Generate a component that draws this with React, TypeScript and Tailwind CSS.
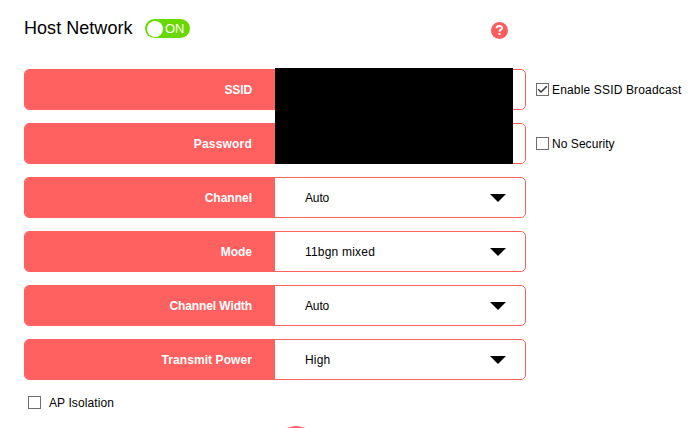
import { ReactNode } from 'react'

interface RowProps {
  label: string
  labelClass?: string
  children?: ReactNode
}

const Row = ({ label, labelClass = '', children }: RowProps) => (
  <div className="flex h-[41px] w-[502px] overflow-hidden rounded-[5px] border border-[#ff6161]">
    <div className="flex w-[250px] shrink-0 items-center justify-end bg-[#ff6161] pr-[23px] font-bold text-white">
      <span className={labelClass}>{label}</span>
    </div>
    {children}
  </div>
)

interface SelectProps {
  value: string
  valueClass?: string
}

const Select = ({ value, valueClass = '' }: SelectProps) => (
  <div className="flex flex-1 items-center justify-between pr-[19px] pl-[30px]">
    <span className={valueClass}>{value}</span>
    <svg width="16" height="8" viewBox="0 0 16 8">
      <path d="M0 0H16L8 8Z" fill="#000" />
    </svg>
  </div>
)

const Checkbox = ({ checked = false }: { checked?: boolean }) => (
  <svg width="13" height="13" viewBox="0 0 13 13" className="shrink-0">
    <rect x="0.5" y="0.5" width="12" height="12" fill="#fff" stroke="#6e6e6e" />
    {checked && (
      <path d="M2.2 6.2L5 9L10.8 3.2" fill="none" stroke="#333" strokeWidth="1.4" />
    )}
  </svg>
)

export default function App() {
  return (
    <div className="h-[428px] w-[689px] overflow-hidden bg-white pl-6 font-['Liberation_Sans',Arial,sans-serif] text-[12px] leading-[14px] whitespace-nowrap text-black">
      <header className="flex h-[69px] items-start">
        <h1 className="mt-[18px] w-[121px] text-[18px] leading-[21px] tracking-[0.04px]">Host Network</h1>
        <div className="mt-[19px] flex h-[19px] w-[45px] items-center rounded-full bg-[#69d800] pl-[2px]">
          <div className="size-[16px] shrink-0 rounded-full bg-white" />
          <span className="ml-[2px] text-[13px] text-white">ON</span>
        </div>
        <svg className="mt-[22px] ml-[301px]" width="17" height="17" viewBox="0 0 17 17">
          <circle cx="8.5" cy="8.5" r="8.5" fill="#ff5c5f" />
          <path
            d="M5.6 6.3C5.6 3.3 11.1 3.3 11.1 6C11.1 7.8 8.5 7.5 8.5 9.8"
            fill="none"
            stroke="#fff"
            strokeWidth="2"
          />
          <rect x="7.5" y="11" width="2" height="2" fill="#fff" />
        </svg>
      </header>

      <div className="relative flex flex-col gap-[13px]">
        <div className="flex items-center">
          <Row label="SSID" labelClass="-tracking-[0.1px]" />
          <label className="ml-[10px] flex items-center gap-[3px]">
            <Checkbox checked />
            <span className="tracking-[0.16px]">Enable SSID Broadcast</span>
          </label>
        </div>
        <div className="flex items-center">
          <Row label="Password" labelClass="tracking-[0.2px]" />
          <label className="ml-[10px] flex items-center gap-[3px]">
            <Checkbox />
            <span className="tracking-[0.05px]">No Security</span>
          </label>
        </div>
        <Row label="Channel">
          <Select value="Auto" valueClass="-tracking-[0.15px]" />
        </Row>
        <Row label="Mode">
          <Select value="11bgn mixed" valueClass="tracking-[0.2px]" />
        </Row>
        <Row label="Channel Width" labelClass="-tracking-[0.1px]">
          <Select value="Auto" valueClass="-tracking-[0.15px]" />
        </Row>
        <Row label="Transmit Power" labelClass="tracking-[0.08px]">
          <Select value="High" valueClass="tracking-[0.15px]" />
        </Row>

        {/* redacted credentials */}
        <div className="absolute top-[-1px] left-[251px] h-[96px] w-[238px] bg-black" />
      </div>

      <label className="mt-4 ml-1 flex h-[13px] items-center gap-2">
        <Checkbox />
        <span className="tracking-[0.1px]">AP Isolation</span>
      </label>

      <div className="mt-[17px] ml-[252px] size-10 rounded-full bg-[#ff6161]" />
    </div>
  )
}
